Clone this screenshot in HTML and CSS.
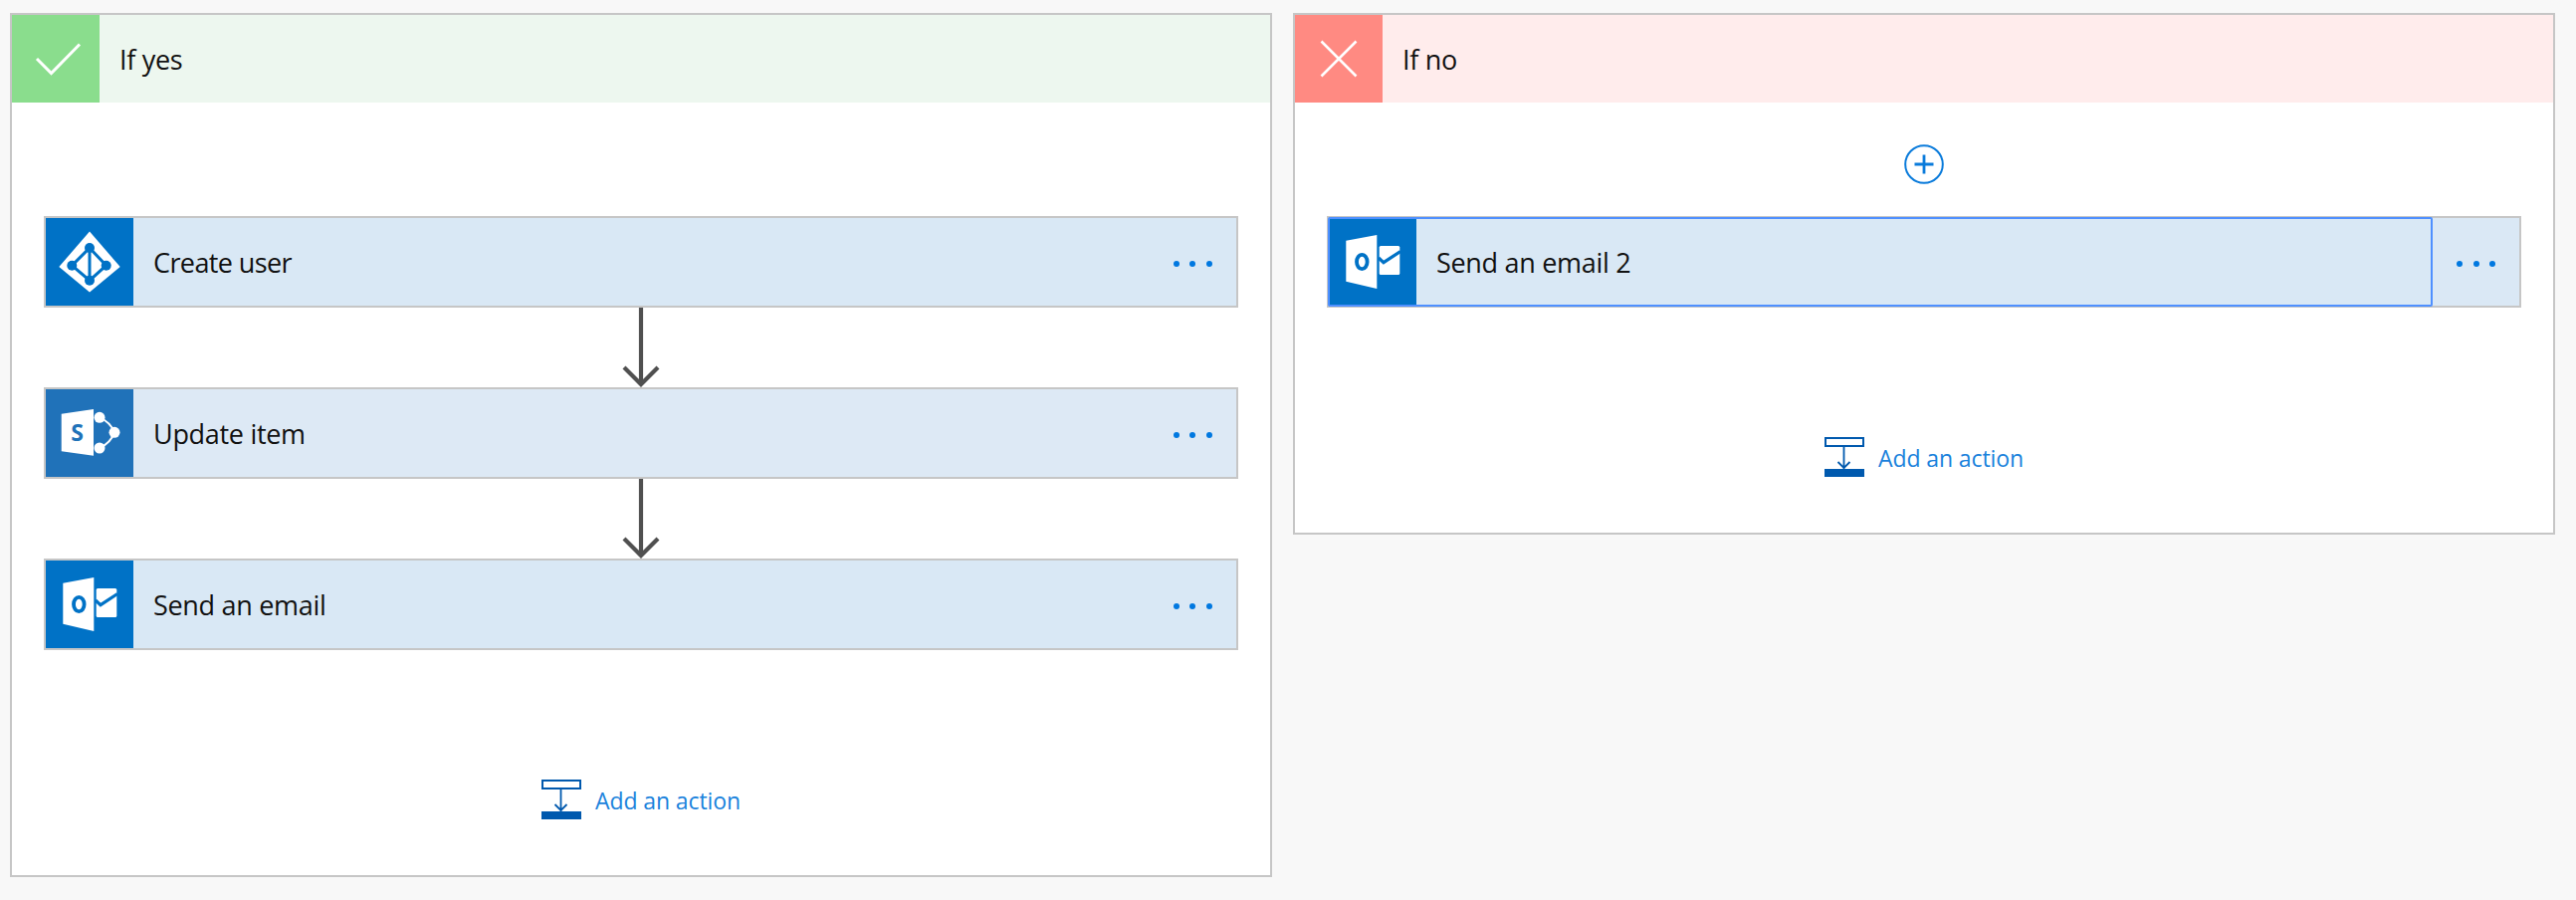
FILE: index.html
```html
<!DOCTYPE html>
<html lang="en">
<head>
<meta charset="utf-8">
<title>Condition branches</title>
<link rel="stylesheet" href="styles.css">
</head>
<body>
<main class="branches">
  <section class="panel panel-yes">
    <header class="panel-head head-yes">
      <span class="head-icon icon-yes">
        <svg width="88" height="88" viewBox="0 0 88 88"><path d="M25 44 L39.500 58.500 L68 29.500" fill="none" stroke="#fff" stroke-width="3"/></svg>
      </span>
      <span class="head-title">If yes</span>
    </header>
    <div class="panel-body body-yes">
      <div class="card tint-a">
        <span class="card-icon brand-blue">
          <svg width="88" height="88" viewBox="0 0 88 88">
            <path d="M44 13.500 L74.700 49 L44 74.500 L13.300 49 Z" fill="#fff"/>
            <path d="M44 30 L60.700 47.700 L44 62.700 L26.300 47.700 Z" fill="none" stroke="#0072c6" stroke-width="3"/>
            <path d="M44 30 V62.700" stroke="#0072c6" stroke-width="3"/>
            <circle cx="44" cy="30" r="5" fill="#0072c6"/>
            <circle cx="44" cy="62.700" r="5" fill="#0072c6"/>
            <circle cx="26.300" cy="47.700" r="5" fill="#0072c6"/>
            <circle cx="60.700" cy="47.700" r="5" fill="#0072c6"/>
          </svg>
        </span>
        <span class="card-title title-tight">Create user</span>
        <span class="card-more"><i></i><i></i><i></i></span>
      </div>
      <div class="arrow">
        <svg width="40" height="80" viewBox="0 0 40 80"><path d="M20 0 V77 M3 60 L20 77 L37 60" fill="none" stroke="#505050" stroke-width="4.200"/></svg>
      </div>
      <div class="card tint-b">
        <span class="card-icon brand-sp">
          <svg width="88" height="88" viewBox="0 0 88 88">
            <path d="M15.700 24.700 L48 20 V66.700 L15.700 62.300 Z" fill="#fff"/>
            <text class="logo-letter" x="31.700" y="52" fill="#2072b9">S</text>
            <path d="M54 28.300 Q65 33 69 43.300 Q65 54 54 59" fill="none" stroke="#fff" stroke-width="2"/>
            <circle cx="54" cy="28.300" r="5.500" fill="#fff"/>
            <circle cx="69" cy="43.300" r="5.500" fill="#fff"/>
            <circle cx="54" cy="59" r="5.500" fill="#fff"/>
          </svg>
        </span>
        <span class="card-title">Update item</span>
        <span class="card-more"><i></i><i></i><i></i></span>
      </div>
      <div class="arrow">
        <svg width="40" height="80" viewBox="0 0 40 80"><path d="M20 0 V77 M3 60 L20 77 L37 60" fill="none" stroke="#505050" stroke-width="4.200"/></svg>
      </div>
      <div class="card tint-a">
        <span class="card-icon brand-blue">
          <svg width="88" height="88" viewBox="0 0 88 88">
            <path d="M17.300 22.700 L48.300 17 V71 L17.300 63.700 Z" fill="#fff"/>
            <ellipse cx="33.300" cy="44" rx="5.300" ry="7.200" fill="none" stroke="#0072c6" stroke-width="3.800"/>
            <rect x="50.700" y="28" width="20.600" height="29" rx="1.500" fill="#fff"/>
            <path d="M50 40 L55 44.700 L72 33.500" fill="none" stroke="#0072c6" stroke-width="3.200"/>
          </svg>
        </span>
        <span class="card-title">Send an email</span>
        <span class="card-more"><i></i><i></i><i></i></span>
      </div>
      <a class="add-action add-yes">
        <svg width="40" height="40" viewBox="0 0 40 40">
          <rect x="1" y="1" width="38" height="8" fill="none" stroke="#0059ae" stroke-width="2"/>
          <path d="M19.500 9 V32 M13.500 25 L19.500 31 L25.500 25" fill="none" stroke="#0059ae" stroke-width="1.800"/>
          <rect x="0" y="32" width="40" height="8" fill="#0059ae"/>
        </svg>
        <span class="add-label">Add an action</span>
      </a>
    </div>
  </section>
  <section class="panel panel-no">
    <header class="panel-head head-no">
      <span class="head-icon icon-no">
        <svg width="88" height="88" viewBox="0 0 88 88"><path d="M26.500 26.500 L61.500 61.500 M61.500 26.500 L26.500 61.500" fill="none" stroke="#fff" stroke-width="2.600"/></svg>
      </span>
      <span class="head-title">If no</span>
    </header>
    <div class="panel-body body-no">
      <div class="plus-row">
        <svg width="40" height="40" viewBox="0 0 40 40"><circle cx="20" cy="20" r="18.800" fill="#fff" stroke="#0a7bdb" stroke-width="2"/><path d="M20 10.500 V29.500 M10.500 20 H29.500" stroke="#0a7bdb" stroke-width="2.800"/></svg>
      </div>
      <div class="card tint-a card-selected">
        <div class="card-main">
          <span class="card-icon brand-blue">
            <svg width="88" height="88" viewBox="0 0 88 88">
              <path d="M17.300 22.700 L48.300 17 V71 L17.300 63.700 Z" fill="#fff"/>
              <ellipse cx="33.300" cy="44" rx="5.300" ry="7.200" fill="none" stroke="#0072c6" stroke-width="3.800"/>
              <rect x="50.700" y="28" width="20.600" height="29" rx="1.500" fill="#fff"/>
              <path d="M50 40 L55 44.700 L72 33.500" fill="none" stroke="#0072c6" stroke-width="3.200"/>
            </svg>
          </span>
          <span class="card-title">Send an email 2</span>
        </div>
        <span class="card-more more-side"><i></i><i></i><i></i></span>
      </div>
      <a class="add-action add-no">
        <svg width="40" height="40" viewBox="0 0 40 40">
          <rect x="1" y="1" width="38" height="8" fill="none" stroke="#0059ae" stroke-width="2"/>
          <path d="M19.500 9 V32 M13.500 25 L19.500 31 L25.500 25" fill="none" stroke="#0059ae" stroke-width="1.800"/>
          <rect x="0" y="32" width="40" height="8" fill="#0059ae"/>
        </svg>
        <span class="add-label">Add an action</span>
      </a>
    </div>
  </section>
</main>
</body>
</html>
```
FILE: styles.css
```css
* { box-sizing: border-box; }
html, body { margin: 0; padding: 0; }
body {
  width: 2588px;
  height: 904px;
  overflow: hidden;
  background: #f8f8f8;
  font-family: "Open Sans", "Noto Sans", sans-serif;
  color: #111;
}
.branches {
  display: flex;
  align-items: flex-start;
  gap: 21px;
  padding: 13px 0 0 10px;
}
.panel {
  width: 1268px;
  background: #fff;
  border: 2px solid #c6c6c6;
}
.panel-yes { height: 868px; }
.panel-no { height: 524px; }
.panel-head {
  display: flex;
  align-items: center;
  height: 88px;
}
.head-yes { background: #edf7ef; }
.head-no { background: #ffecec; }
.head-icon { width: 88px; height: 88px; flex: none; }
.head-icon svg, .card-icon svg { display: block; }
.icon-yes { background: #8add8d; }
.icon-no { background: #ff8a82; }
.head-title {
  margin-left: 20px;
  font-size: 27px;
  letter-spacing: -0.3px;
}
.panel-body {
  display: flex;
  flex-direction: column;
  padding: 0 32px;
}
.body-yes { padding-top: 114px; }
.body-no { padding-top: 42px; }
.plus-row {
  display: flex;
  justify-content: center;
  height: 72px;
}
.card {
  display: flex;
  align-items: center;
  height: 92px;
  width: 1200px;
  border: 2px solid #c6c6c6;
}
.tint-a { background: #d9e8f5; }
.tint-b { background: #dde9f5; }
.card-icon { width: 88px; height: 88px; flex: none; }
.brand-blue { background: #0072c6; }
.brand-sp { background: #2072b9; }
.logo-letter {
  font-family: "Open Sans", sans-serif;
  font-size: 23px;
  font-weight: 700;
  text-anchor: middle;
}
.card-title {
  flex: 1;
  margin-left: 20px;
  font-size: 27px;
  letter-spacing: -0.3px;
}
.title-tight { letter-spacing: -0.6px; }
.card-more {
  display: flex;
  gap: 10.5px;
  margin: 4px 24.5px 0 0;
}
.card-more i {
  width: 6px;
  height: 6px;
  border-radius: 50%;
  background: #0078e0;
}
.card-main {
  position: relative;
  display: flex;
  align-items: center;
  flex: 1;
  height: 88px;
}
.card-main::after {
  content: "";
  position: absolute;
  top: -1px;
  bottom: -1px;
  left: -1px;
  right: 0;
  border: 2px solid #4f90ff;
  border-radius: 2px;
}
.card-selected .more-side {
  flex: none;
  width: 87px;
  height: 88px;
  justify-content: center;
  align-items: center;
  margin: 0;
  padding-top: 4px;
  background: #dae8f5;
}
.arrow {
  display: flex;
  justify-content: center;
  height: 80px;
}
.add-action {
  display: flex;
  align-items: center;
  justify-content: center;
  gap: 14px;
  color: #1a82dc;
  font-size: 23px;
  letter-spacing: -0.1px;
}
.add-label { padding-top: 2px; }
.add-yes { margin-top: 130px; }
.add-no { margin-top: 130px; }
```
